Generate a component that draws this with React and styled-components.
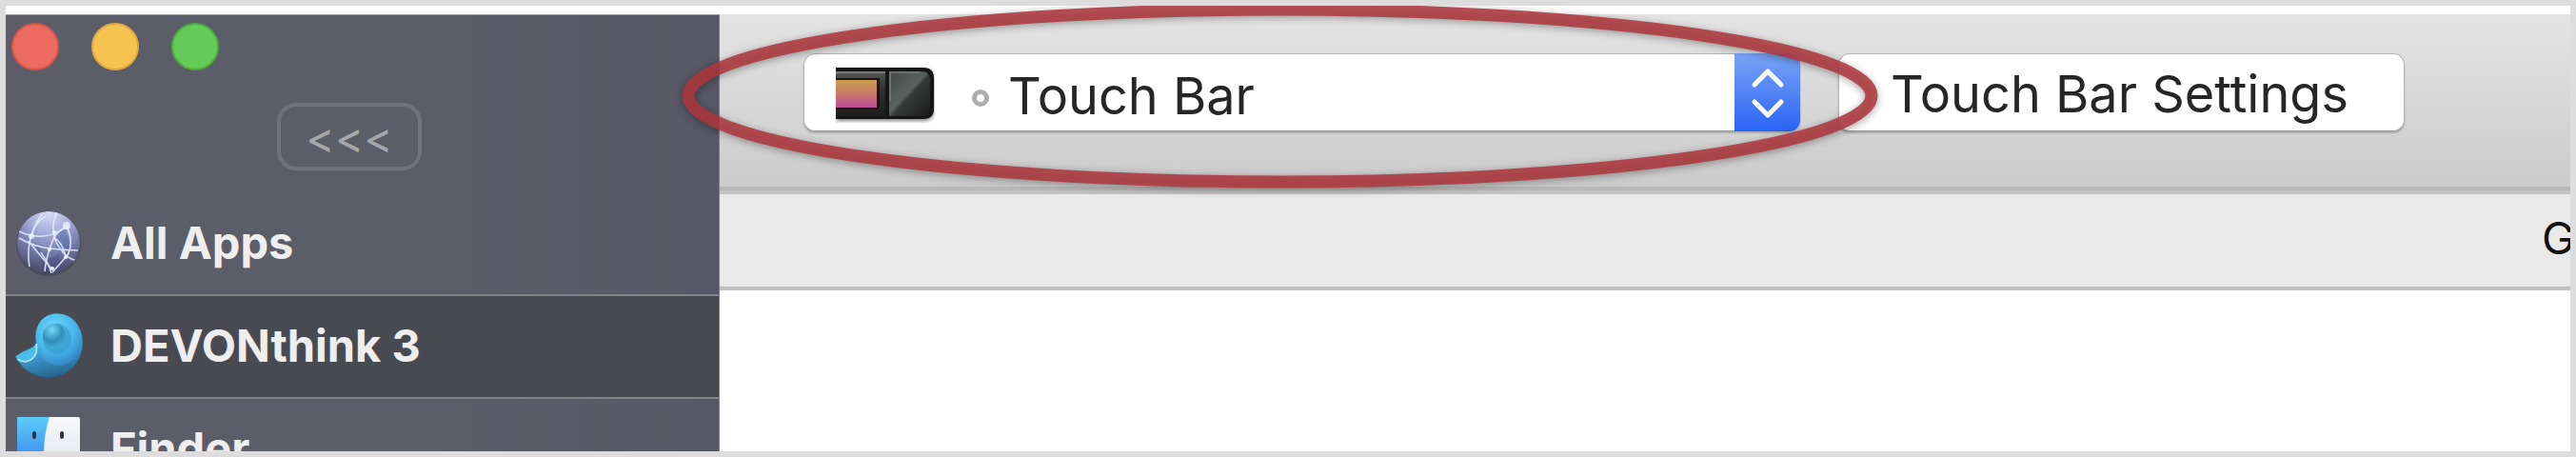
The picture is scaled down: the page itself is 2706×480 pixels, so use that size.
import React from "react";
import styled, { createGlobalStyle } from "styled-components";

const GlobalStyle = createGlobalStyle`
  *, *::before, *::after { box-sizing: border-box; }
  body { margin: 0; font-family: Inter, "Liberation Sans", sans-serif; }
  button, select { font: inherit; margin: 0; }
  h1, ul { margin: 0; padding: 0; }
`;

const Frame = styled.div`
  display: flex;
  height: 100vh;
  border: 6px solid #dddddd;
  padding-top: 9px;
  background: #ffffff;
  overflow: hidden;
`;

const Sidebar = styled.aside`
  flex: 0 0 750px;
  display: flex;
  flex-direction: column;
  border-top: 1px solid #9a9da0;
  border-right: 1px solid #7b7d88;
  background: linear-gradient(90deg, #5c5d68, #5b5d69 60%, #565965);
`;

const WindowControls = styled.div`
  display: flex;
  gap: 34px;
  padding: 8px 6px 0;
`;

const WindowButton = styled.button`
  width: 50px;
  height: 50px;
  padding: 0;
  border: 2px solid ${(p) => p.$edge};
  border-radius: 50%;
  background: ${(p) => p.$fill};
`;

const CollapseButton = styled.button`
  margin: 34px 0 0 285px;
  width: 152px;
  height: 71px;
  flex: none;
  padding: 0;
  border: 4px solid #70727d;
  border-radius: 20px;
  background: transparent;
  color: #a6a6ab;
  font-size: 46px;
  line-height: 50px;
`;

const AppList = styled.ul`
  margin-top: 24px;
  list-style: none;
`;

const AppRow = styled.li`
  height: 108px;
  border-bottom: 2px solid #82838a;
  background: ${(p) => (p.$selected ? "linear-gradient(90deg, #4a4b51, #484a51 60%, #47494f)" : "transparent")};
`;

const AppLink = styled.a`
  display: flex;
  align-items: center;
  gap: 28px;
  height: 100%;
  padding: 0 0 2px 8px;
  color: #eeeeee;
  font-size: 47px;
  font-weight: 700;
  line-height: 56px;
  text-decoration: none;
  white-space: nowrap;
`;

const AppIcon = styled.span`
  flex: 0 0 74px;
  display: flex;
  justify-content: center;
`;

const Main = styled.main`
  flex: 1;
  min-width: 0;
`;

const Toolbar = styled.div`
  display: flex;
  align-items: flex-start;
  gap: 40px;
  height: 189px;
  padding: 41px 88px 0;
  background: linear-gradient(#e4e4e4, #cbcbcb);
  border-bottom: 4px solid #c2c2c2;
  box-shadow: inset 0 -4px 0 #b8b8b8;
`;

const controlBox = `
  height: 82px;
  border: 1px solid #b4b4b4;
  border-bottom-color: #999999;
  border-radius: 12px;
  background: #ffffff;
  box-shadow: 0 2px 2px rgba(0, 0, 0, 0.2);
  color: #262626;
  font-size: 54px;
  line-height: 64px;
`;

const Popup = styled.div`
  ${controlBox}
  position: relative;
  flex: 0 1 1047px;
  display: flex;
  align-items: center;
  padding-left: 33px;

  > svg { flex: none; }
`;

const Ring = styled.span`
  flex: none;
  width: 18px;
  height: 18px;
  margin: 12px 20px 0 39px;
  border: 5px solid #adadad;
  border-radius: 50%;
`;

const Select = styled.select`
  flex: 1;
  min-width: 0;
  height: 76px;
  padding: 8px 0 0;
  appearance: none;
  border: 0;
  outline: 0;
  background: transparent;
  color: inherit;
`;

const Stepper = styled.span`
  flex: none;
  align-self: stretch;
  display: flex;
  width: 69px;
  margin: -1px;
  border-radius: 0 12px 12px 0;
  background: linear-gradient(#79a5f5, #2a63f6);
`;

const Highlight = styled.svg`
  position: absolute;
  z-index: 2;
  left: -140px;
  top: -65px;
  width: calc(100% + 234px);
  height: 217px;
  pointer-events: none;
  overflow: visible;
  filter: drop-shadow(0 2px 4px rgba(0, 0, 0, 0.4));

  ellipse {
    fill: none;
    stroke: rgba(174, 55, 61, 0.86);
    stroke-width: 13px;
    rx: calc(50% - 18px);
    ry: calc(50% - 18px);
  }
`;

const SettingsButton = styled.button`
  ${controlBox}
  flex: 0 0 595px;
  padding: 4px 4px 0 0;
  white-space: nowrap;
`;

const ColumnBar = styled.div`
  display: flex;
  height: 101px;
  padding-top: 18px;
  background: #e9e9e9;
  border-bottom: 4px solid #c0c0c0;
`;

const ColumnTitle = styled.h1`
  width: 30px;
  margin-left: auto;
  overflow: hidden;
  color: #111111;
  font-size: 47px;
  font-weight: 400;
  line-height: 56px;
`;

const GlobeIcon = () => (
  <svg width="70" height="70" viewBox="0 0 70 70" aria-hidden="true">
    <defs>
      <radialGradient id="globe" cx="0.52" cy="0.02" r="1">
        <stop offset="0" stopColor="#d8dcf6" />
        <stop offset="0.35" stopColor="#a3aad6" />
        <stop offset="0.65" stopColor="#7279a6" />
        <stop offset="1" stopColor="#41445f" />
      </radialGradient>
      <clipPath id="globeClip"><circle cx="35" cy="35" r="33" /></clipPath>
    </defs>
    <circle cx="35" cy="36" r="34" fill="#40414f" opacity="0.6" />
    <circle cx="35" cy="35" r="33" fill="url(#globe)" />
    <g clipPath="url(#globeClip)">
      <path d="M20 34L35 52L46 47L50 63L30 64Z" fill="#4c5181" opacity="0.4" />
      <path d="M43 25L53 21L59 42L43 41Z" fill="#4c68a3" opacity="0.5" />
      <g fill="none" stroke="#e4e9ff" strokeWidth="1.6" opacity="0.9">
        <path d="M4 23Q32 36 55 17" />
        <path d="M4 30Q18 38 30 40T66 43" />
        <path d="M28 5Q10 30 15 60" />
        <path d="M44 3Q37 16 42 32Q51 52 66 54" />
        <path d="M14 33Q28 51 40 64" />
        <path d="M17 28Q21 13 32 7" />
        <path d="M55 17Q44 23 40 31Q32 51 31 65" />
        <path d="M54 17Q62 35 55 48Q47 57 39 66" />
        <path d="M41 30Q49 34 53 49" />
        <path d="M27 45Q35 56 38 67" />
      </g>
      <g fill="#edf1ff">
        <circle cx="54" cy="17" r="4" opacity="0.8" />
        <circle cx="17" cy="28" r="3" opacity="0.8" />
        <circle cx="41" cy="24" r="2" />
        <circle cx="36" cy="42" r="2" />
        <circle cx="53" cy="50" r="2" />
        <circle cx="39" cy="62" r="2" />
      </g>
    </g>
  </svg>
);

const ShellIcon = () => (
  <svg width="74" height="70" viewBox="0 0 74 70" aria-hidden="true">
    <defs>
      <linearGradient id="shell" x1="0.4" y1="0" x2="0.65" y2="1">
        <stop offset="0" stopColor="#63cff4" />
        <stop offset="0.5" stopColor="#42a8df" />
        <stop offset="1" stopColor="#245f88" />
      </linearGradient>
      <radialGradient id="shellBody" cx="0.4" cy="0.3" r="0.7">
        <stop offset="0" stopColor="#6cdafa" />
        <stop offset="0.65" stopColor="#46b5e9" />
        <stop offset="1" stopColor="#3489c6" />
      </radialGradient>
      <radialGradient id="shellEye" cx="0.4" cy="0.25" r="0.75">
        <stop offset="0" stopColor="#74dcf8" />
        <stop offset="0.6" stopColor="#2f8db8" />
        <stop offset="1" stopColor="#45aadd" />
      </radialGradient>
    </defs>
    <path d="M2 47C10 40 22 40 24 34C20 16 29 2 45 1C63 1 73 16 73 32C73 54 56 69 36 69C21 68 9 60 2 47Z" fill="url(#shell)" stroke="#304c60" strokeWidth="0.7" />
    <ellipse cx="48" cy="29" rx="24" ry="27" fill="url(#shellBody)" />
    <ellipse cx="46" cy="28" rx="15" ry="16" fill="#3798cb" opacity="0.65" />
    <ellipse cx="43" cy="25" rx="12" ry="13" fill="url(#shellEye)" />
    <path d="M2 47C9 40 20 39 24 33C26 45 16 57 2 47Z" fill="#4dbce7" />
    <path d="M4 49C15 56 27 48 24 33" fill="none" stroke="#a8e4f0" strokeWidth="1.8" />
  </svg>
);

const FinderIcon = () => (
  <svg width="70" height="70" viewBox="0 0 70 70" aria-hidden="true">
    <defs>
      <linearGradient id="finderBlue" x1="0" y1="0" x2="0" y2="1">
        <stop offset="0" stopColor="#5dccf8" />
        <stop offset="0.5" stopColor="#459df1" />
        <stop offset="1" stopColor="#2577e8" />
      </linearGradient>
      <linearGradient id="finderWhite" x1="0" y1="0" x2="0" y2="1">
        <stop offset="0" stopColor="#f8f8fa" />
        <stop offset="1" stopColor="#dce3ec" />
      </linearGradient>
    </defs>
    <rect x="2" y="2" width="66" height="66" rx="2" fill="url(#finderWhite)" />
    <path d="M2 2H36Q30 20 30 42H40L42 68H2Z" fill="url(#finderBlue)" />
    <g fill="#30343c">
      <rect x="18" y="17" width="4" height="8" rx="2" />
      <rect x="47" y="17" width="4" height="8" rx="2" />
    </g>
    <path d="M14 48Q35 62 56 48" fill="none" stroke="#30343c" strokeWidth="2" />
  </svg>
);

const TouchBarIcon = () => (
  <svg width="104" height="64" viewBox="0 0 104 64" aria-hidden="true">
    <defs>
      <linearGradient id="barBody" x1="0" y1="0" x2="0" y2="1">
        <stop offset="0" stopColor="#555756" />
        <stop offset="0.35" stopColor="#333333" />
        <stop offset="1" stopColor="#1c1c1c" />
      </linearGradient>
      <linearGradient id="barScreen" x1="0" y1="0" x2="0" y2="1">
        <stop offset="0" stopColor="#ca9c4b" />
        <stop offset="0.45" stopColor="#c97c64" />
        <stop offset="1" stopColor="#bc4b9b" />
      </linearGradient>
      <linearGradient id="barGlass" x1="0" y1="0" x2="1" y2="1">
        <stop offset="0" stopColor="#484848" />
        <stop offset="0.47" stopColor="#59625f" />
        <stop offset="0.53" stopColor="#373939" />
        <stop offset="1" stopColor="#1a1a1a" />
      </linearGradient>
      <filter id="barShadow" x="-0.1" y="-0.2" width="1.2" height="1.5">
        <feDropShadow dx="0" dy="2" stdDeviation="2" floodOpacity="0.5" />
      </filter>
    </defs>
    <path d="M0 6H92Q103 6 103 17V49Q103 60 92 60H0Z" fill="#161818" filter="url(#barShadow)" />
    <path d="M0 10H52V57H0Z" fill="url(#barBody)" />
    <path d="M0 11H52" stroke="#777b7b" strokeWidth="2" />
    <rect x="0" y="17" width="46" height="33" fill="#171412" />
    <rect x="0" y="19" width="43" height="29" fill="url(#barScreen)" />
    <path d="M56 10H90Q99 10 99 19V47Q99 57 90 57H56Z" fill="url(#barGlass)" />
    <path d="M57 41V11H88" fill="none" stroke="#7c8280" strokeWidth="2" opacity="0.7" />
  </svg>
);

const apps = [
  { name: "All Apps", icon: <GlobeIcon /> },
  { name: "DEVONthink 3", icon: <ShellIcon />, selected: true },
  { name: "Finder", icon: <FinderIcon /> },
];

export default function App() {
  return (
    <>
      <GlobalStyle />
      <Frame>
        <Sidebar>
          <WindowControls>
            <WindowButton aria-label="Close" $fill="#ed6b60" $edge="#d8564b" />
            <WindowButton aria-label="Minimize" $fill="#f6c350" $edge="#dfa840" />
            <WindowButton aria-label="Zoom" $fill="#65cb58" $edge="#4bad3c" />
          </WindowControls>
          <CollapseButton aria-label="Collapse sidebar">&lt;&lt;&lt;</CollapseButton>
          <AppList>
            {apps.map((app) => (
              <AppRow key={app.name} $selected={app.selected}>
                <AppLink href="#">
                  <AppIcon>{app.icon}</AppIcon>
                  {app.name}
                </AppLink>
              </AppRow>
            ))}
          </AppList>
        </Sidebar>
        <Main>
          <Toolbar>
            <Popup>
              <TouchBarIcon />
              <Ring />
              <Select aria-label="Trigger type" defaultValue="touchbar">
                <option value="touchbar">Touch Bar</option>
              </Select>
              <Stepper>
                <svg width="69" height="84" viewBox="0 0 69 84" fill="none" stroke="#ffffff" strokeWidth="5" strokeLinecap="round" strokeLinejoin="round" aria-hidden="true">
                  <path d="M21 33L35 19L49 33M21 51L35 65L49 51" />
                </svg>
              </Stepper>
              <Highlight aria-hidden="true">
                <ellipse cx="50%" cy="50%" />
              </Highlight>
            </Popup>
            <SettingsButton>Touch Bar Settings</SettingsButton>
          </Toolbar>
          <ColumnBar>
            <ColumnTitle>G</ColumnTitle>
          </ColumnBar>
        </Main>
      </Frame>
    </>
  );
}
